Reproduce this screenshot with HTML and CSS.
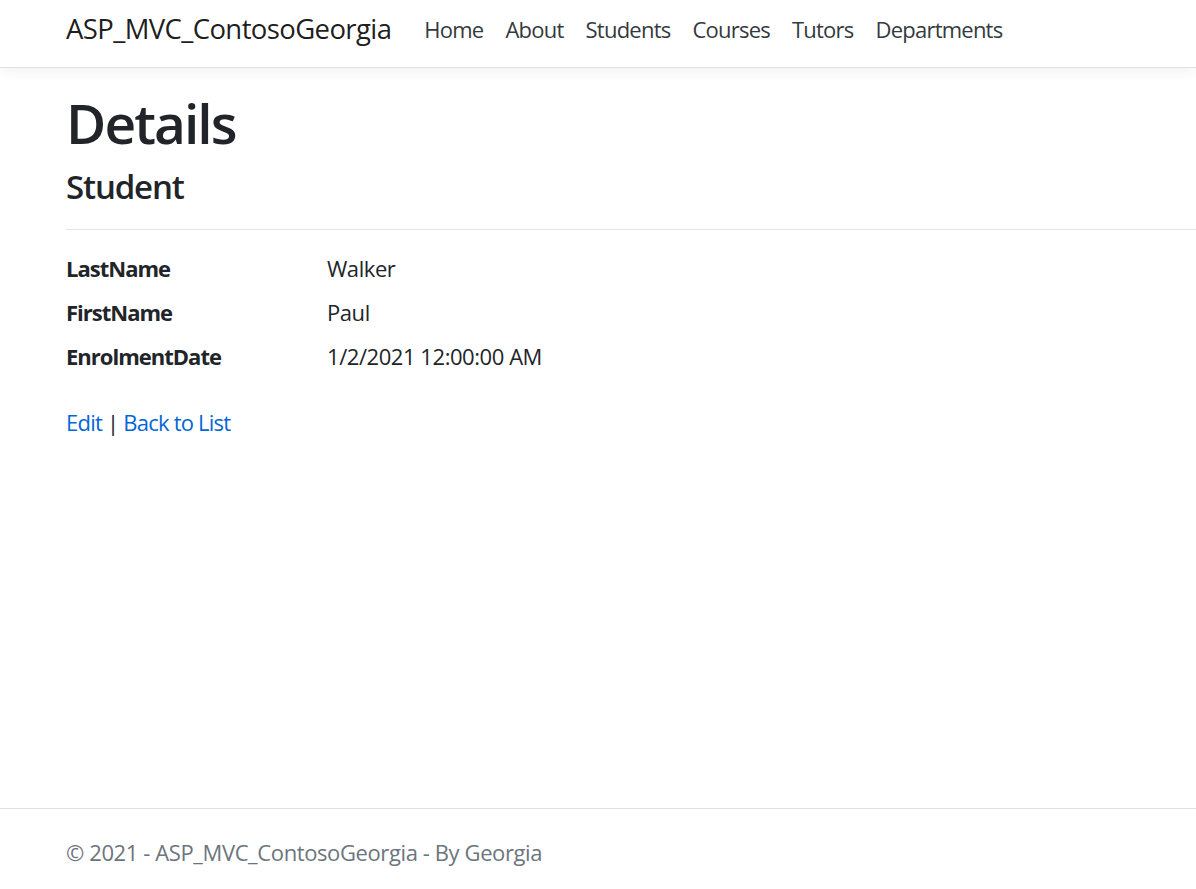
FILE: index.html
```html
<!DOCTYPE html>
<html lang="en">
<head>
<meta charset="utf-8">
<title>Details - ASP_MVC_ContosoGeorgia</title>
<link rel="stylesheet" href="styles.css">
</head>
<body>
<header class="navbar">
  <div class="container nav-inner">
    <a class="brand" href="#">ASP_MVC_ContosoGeorgia</a>
    <ul class="nav-links">
      <li><a href="#">Home</a></li>
      <li><a href="#">About</a></li>
      <li><a href="#">Students</a></li>
      <li><a href="#">Courses</a></li>
      <li><a href="#">Tutors</a></li>
      <li><a href="#">Departments</a></li>
    </ul>
  </div>
</header>
<main class="container main">
  <h1 class="title">Details</h1>
  <div>
    <h4 class="subtitle">Student</h4>
    <hr class="divider">
    <dl class="details">
      <dt>LastName</dt><dd>Walker</dd>
      <dt>FirstName</dt><dd>Paul</dd>
      <dt>EnrolmentDate</dt><dd>1/2/2021 12:00:00 AM</dd>
    </dl>
  </div>
  <div class="actions">
    <a href="#">Edit</a> | <a href="#">Back to List</a>
  </div>
</main>
<footer class="footer">
  <div class="container">&copy; 2021 - ASP_MVC_ContosoGeorgia - By Georgia</div>
</footer>
</body>
</html>
```
FILE: styles.css
```css
* { box-sizing: border-box; }
html, body { margin: 0; padding: 0; }
body {
  font-family: "Open Sans", "Noto Sans", "Liberation Sans", sans-serif;
  font-size: 22px;
  line-height: 1.5;
  letter-spacing: -0.02em;
  color: #212529;
  background: #fff;
  height: 100vh;
  display: flex;
  flex-direction: column;
}
a { text-decoration: none; }
.container {
  padding-left: 66px;
  padding-right: 0;
  width: 100%;
}
.navbar {
  height: 68px;
  flex: none;
  background: #fff;
  border-bottom: 1px solid #dee2e6;
  box-shadow: 0 4px 12px rgba(0,0,0,.05);
  padding-top: 9px;
}
.nav-inner {
  display: flex;
  align-items: center;
}
.brand {
  font-size: 27.5px;
  color: rgba(0,0,0,.9);
  margin-right: 22px;
  line-height: 40px;
  white-space: nowrap;
  letter-spacing: -0.022em;
}
.nav-links {
  list-style: none;
  margin: 0;
  padding: 0;
  display: flex;
}
.nav-links a {
  display: block;
  padding: 0 11px;
  color: #343a40;
  white-space: nowrap;
  letter-spacing: -0.035em;
}
.main {
  flex: 1;
  padding-top: 22px;
}
.title {
  font-size: 55px;
  font-weight: 600;
  line-height: 1.2;
  margin: 0 0 11px;
  letter-spacing: -0.035em;
}
.subtitle {
  font-size: 33px;
  font-weight: 600;
  line-height: 1.2;
  margin: 0 0 11px;
  letter-spacing: -0.035em;
}
.divider {
  border: 0;
  border-top: 1px solid rgba(0,0,0,.1);
  margin: 22px 0;
}
.details {
  display: grid;
  grid-template-columns: 261px 1fr;
  margin: 0 0 22px;
}
.details dt {
  font-weight: 700;
  margin: 0;
  letter-spacing: -0.045em;
}
.details dd {
  margin: 0 0 11px;
}
.actions { letter-spacing: -0.035em; }
.actions a { color: #0366d6; }
.footer {
  flex: none;
  height: 81px;
  border-top: 1px solid #dee2e6;
  color: #6c757d;
  padding-top: 6px;
  line-height: 74px;
  white-space: nowrap;
  letter-spacing: -0.018em;
}
```
